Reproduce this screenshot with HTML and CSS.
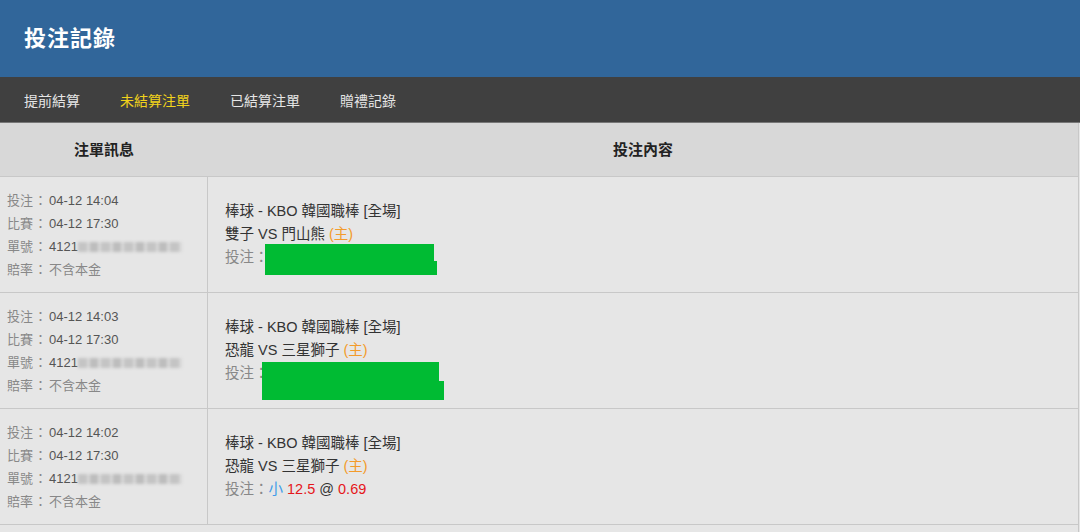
FILE: index.html
```html
<!DOCTYPE html>
<html lang="zh-Hant">
<head>
    <meta charset="UTF-8">
    <meta name="viewport" content="width=device-width, initial-scale=1.0">
    <title>投注記錄</title>
    <link rel="stylesheet" href="styles.css">
</head>
<body>
    <div class="header">
        <h1>投注記錄</h1>
    </div>
    <div class="nav">
        <a href="#">提前結算</a>
        <a href="#" class="active">未結算注單</a>
        <a href="#">已結算注單</a>
        <a href="#">贈禮記錄</a>
    </div>
    <div class="table">
        <div class="row head">
            <div class="cell info">注單訊息</div>
            <div class="cell content">投注內容</div>
        </div>

        <div class="row">
            <div class="cell info">
                <p><span class="label">投注<i>：</i></span>04-12 14:04</p>
                <p><span class="label">比賽<i>：</i></span>04-12 17:30</p>
                <p><span class="label">單號<i>：</i></span>4121<span class="blur"></span></p>
                <p><span class="label">賠率<i>：</i>不含本金</span></p>
            </div>
            <div class="cell content">
                <p>棒球 - KBO 韓國職棒 [全場]</p>
                <p>雙子 VS 門山熊 <span class="home">(主)</span></p>
                <p class="bet"><span class="label">投注：</span><span class="hide hide-a"></span></p>
            </div>
        </div>

        <div class="row">
            <div class="cell info">
                <p><span class="label">投注<i>：</i></span>04-12 14:03</p>
                <p><span class="label">比賽<i>：</i></span>04-12 17:30</p>
                <p><span class="label">單號<i>：</i></span>4121<span class="blur"></span></p>
                <p><span class="label">賠率<i>：</i>不含本金</span></p>
            </div>
            <div class="cell content">
                <p>棒球 - KBO 韓國職棒 [全場]</p>
                <p>恐龍 VS 三星獅子 <span class="home">(主)</span></p>
                <p class="bet"><span class="label">投注：</span><span class="hide hide-b"></span></p>
            </div>
        </div>

        <div class="row">
            <div class="cell info">
                <p><span class="label">投注<i>：</i></span>04-12 14:02</p>
                <p><span class="label">比賽<i>：</i></span>04-12 17:30</p>
                <p><span class="label">單號<i>：</i></span>4121<span class="blur"></span></p>
                <p><span class="label">賠率<i>：</i>不含本金</span></p>
            </div>
            <div class="cell content">
                <p>棒球 - KBO 韓國職棒 [全場]</p>
                <p>恐龍 VS 三星獅子 <span class="home">(主)</span></p>
                <p><span class="label">投注：</span><span class="pick">小</span> <span class="odds">12.5</span> @ <span class="odds">0.69</span></p>
            </div>
        </div>

        <div class="row"></div>
    </div>
</body>
</html>
```

FILE: styles.css
```css
body {
    margin: 0;
    padding: 0;
    font-family: "Liberation Sans", Arial, "Noto Sans CJK TC", sans-serif;
    background-color: #e6e6e6;
    overflow: hidden;
}

p {
    margin: 0;
}

.header {
    height: 77px;
    background-color: #31669a;
    display: flex;
    align-items: center;
    padding-left: 24px;
}

.header h1 {
    margin: 0 0 6px 0;
    color: #fff;
    font-size: 22px;
    font-weight: bold;
    letter-spacing: 1px;
}

.nav {
    height: 45px;
    background-color: #404040;
    border-bottom: 1px solid #777;
    display: flex;
    align-items: center;
    gap: 40px;
    padding-left: 24px;
}

.nav a {
    color: #e6e6e6;
    text-decoration: none;
    font-size: 14px;
}

.nav a.active {
    color: #f2d31b;
}

.table {
    width: 1078px;
    border-right: 1px solid #c8c8c8;
}

.row {
    display: grid;
    grid-template-columns: 208px 1fr;
    height: 115px;
    border-bottom: 1px solid #c8c8c8;
}

.row.head {
    height: 53px;
    background-color: #d8d8d8;
}

.cell {
    display: flex;
    flex-direction: column;
    justify-content: center;
}

.row .info {
    border-right: 1px solid #c8c8c8;
}

.row.head .cell {
    align-items: center;
    padding: 0;
    font-size: 15px;
    font-weight: bold;
    color: #222;
    border-right: none;
}

.info {
    padding-left: 7px;
    font-size: 13px;
    line-height: 23px;
    color: #555;
}

.content {
    padding-left: 17px;
    font-size: 14.5px;
    line-height: 23px;
    color: #333;
}

.label {
    color: #888;
}

/* a little more room round the colon in the left column */
.label i {
    font-style: normal;
    margin: 0 2px 0 1px;
}

.home {
    color: #f39b2b;
}

.pick {
    color: #3d9be9;
}

.odds {
    color: #e5161b;
}

.bet {
    position: relative;
}

.blur {
    display: inline-block;
    width: 104px;
    height: 10px;
    vertical-align: -1px;
    background: repeating-linear-gradient(90deg, #c4c4c4 0 9px, #d8d8d8 9px 12px, #bdbdbd 12px 20px, #dadada 20px 23px);
    filter: blur(1.5px);
}

.hide {
    position: absolute;
    background-color: #00bb33;
}

.hide::after {
    content: "";
    position: absolute;
    left: 0;
    bottom: 0;
    background-color: #00bb33;
}

.hide-a {
    left: 40px;
    top: -2px;
    width: 169px;
    height: 31px;
}

.hide-a::after {
    width: 172px;
    height: 14px;
}

.hide-b {
    left: 37px;
    top: 0;
    width: 177px;
    height: 38px;
}

.hide-b::after {
    width: 182px;
    height: 19px;
}
```
